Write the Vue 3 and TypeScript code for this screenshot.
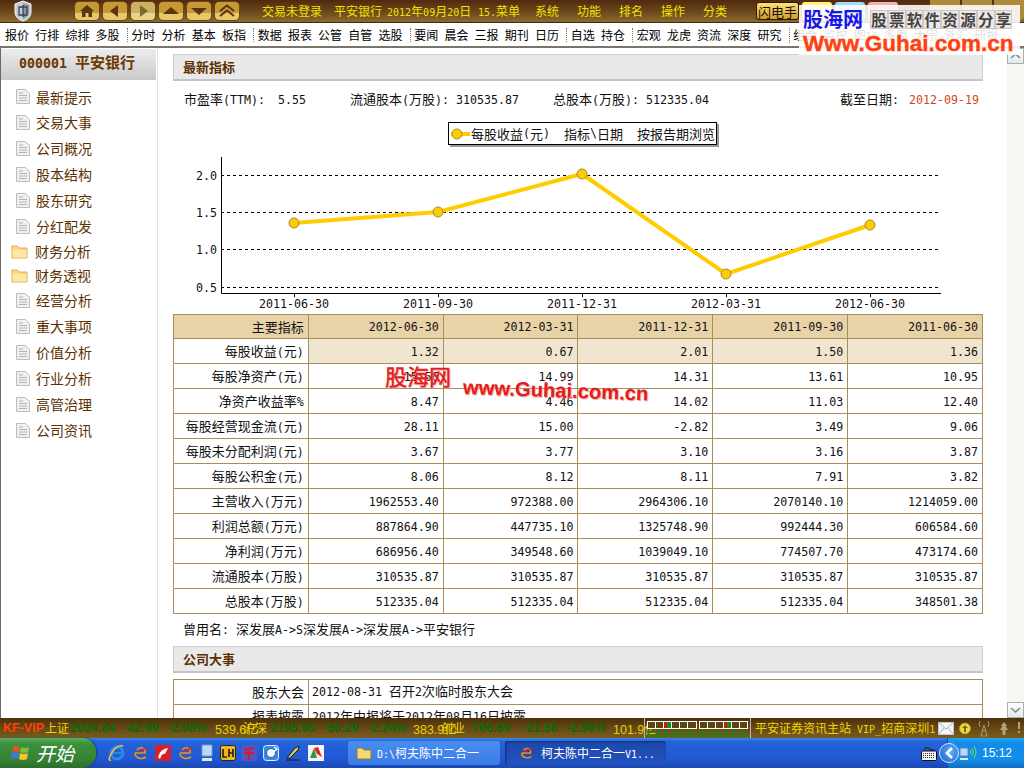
<script setup lang="ts">
import { h } from 'vue'
import type { FunctionalComponent } from 'vue'

// The reference uses a bitmap CJK face with half-width Latin; split text into runs so
// Latin characters get a monospaced face sized to the half-width advance.
function runs(s: string): { t: string; a: boolean }[] {
  const out: { t: string; a: boolean }[] = []
  for (const ch of s) {
    const a = ch.charCodeAt(0) < 128
    const last = out[out.length - 1]
    if (last && last.a === a) last.t += ch
    else out.push({ t: ch, a })
  }
  return out
}
const T: FunctionalComponent<{ s: string }> = (p) =>
  runs(p.s).map((r) => h('span', { class: r.a ? 'lat' : 'cjk' }, r.t))
T.props = ['s']

const toolGroups = [
  ['报价', '行排', '综排', '多股'],
  ['分时', '分析', '基本', '板指'],
  ['数据', '报表', '公管', '自管', '选股'],
  ['要闻', '晨会', '三报', '期刊', '日历'],
  ['自选', '持仓'],
  ['宏观', '龙虎', '资流', '深度', '研究'],
  ['组合', '监控', '图10', '多周', '大宗', '外汇', '研报']
]
const titleMenus = ['系统', '功能', '排名', '操作', '分类']
const navItems = [
  { t: '最新提示' }, { t: '交易大事' }, { t: '公司概况' }, { t: '股本结构' }, { t: '股东研究' }, { t: '分红配发' },
  { t: '财务分析', folder: true }, { t: '财务透视', folder: true },
  { t: '经营分析' }, { t: '重大事项' }, { t: '价值分析' }, { t: '行业分析' }, { t: '高管治理' }, { t: '公司资讯' }
]
const headers = ['2012-06-30', '2012-03-31', '2011-12-31', '2011-09-30', '2011-06-30']
const rows = [
  ['每股收益(元)', '1.32', '0.67', '2.01', '1.50', '1.36'],
  ['每股净资产(元)', '15.56', '14.99', '14.31', '13.61', '10.95'],
  ['净资产收益率%', '8.47', '4.46', '14.02', '11.03', '12.40'],
  ['每股经营现金流(元)', '28.11', '15.00', '-2.82', '3.49', '9.06'],
  ['每股未分配利润(元)', '3.67', '3.77', '3.10', '3.16', '3.87'],
  ['每股公积金(元)', '8.06', '8.12', '8.11', '7.91', '3.82'],
  ['主营收入(万元)', '1962553.40', '972388.00', '2964306.10', '2070140.10', '1214059.00'],
  ['利润总额(万元)', '887864.90', '447735.10', '1325748.90', '992444.30', '606584.60'],
  ['净利润(万元)', '686956.40', '349548.60', '1039049.10', '774507.70', '473174.60'],
  ['流通股本(万股)', '310535.87', '310535.87', '310535.87', '310535.87', '310535.87'],
  ['总股本(万股)', '512335.04', '512335.04', '512335.04', '512335.04', '348501.38']
]
const pts = [
  { x: 294, y: 223, d: '2011-06-30' },
  { x: 438, y: 212, d: '2011-09-30' },
  { x: 582, y: 174, d: '2011-12-31' },
  { x: 726, y: 274, d: '2012-03-31' },
  { x: 870, y: 225, d: '2012-06-30' }
]
const polyline = pts.map((p) => `${p.x},${p.y}`).join(' ')
const grid = [
  { y: 175, l: '2.0' },
  { y: 212, l: '1.5' },
  { y: 249, l: '1.0' },
  { y: 287, l: '0.5' }
]
const quote = [
  { t: 'KF-VIP', c: 'kf' }, { t: '上证', c: 'yl' }, { t: '2024.84', c: 'gn' }, { t: '-42.99', c: 'gn' }, { t: '-2.08%', c: 'gn' },
  { t: '539.6亿', c: 'yn' }, { t: '沪深', c: 'yl' }, { t: '2195.95', c: 'gn' }, { t: '-50.29', c: 'gn' }, { t: '-2.24%', c: 'gn' },
  { t: '383.9亿', c: 'yn' }, { t: '创业', c: 'yl' }, { t: '706.69', c: 'gn' }, { t: '-21.56', c: 'gn' }, { t: '-2.96%', c: 'gn' },
  { t: '101.9亿', c: 'yn' }
]
const ad = '股票软件资源分享'.split('')
</script>

<template>
  <div class="win">
    <!-- title bar -->
    <header class="title">
      <svg class="shield" width="20" height="22" viewBox="0 0 20 22">
        <path d="M10 1 L18 4 V12 C18 17 14 20 10 21 C6 20 2 17 2 12 V4 Z" fill="#c4ccd4" stroke="#f2f4f6" />
        <path d="M10 3 L16 5 V12 C16 15 13 18 10 19 Z" fill="#8c98a4" />
        <path d="M6 7 H14 V15 H6 Z M10 5 V17" fill="none" stroke="#3a4450" stroke-width="1.3" />
      </svg>
      <div class="navbtns">
        <button class="nb">
          <svg width="16" height="14" viewBox="0 0 16 14"><path d="M8 1 L15 7 H13 V13 H9.5 V9 H6.5 V13 H3 V7 H1 Z" fill="#5a3510" /></svg>
        </button>
        <button class="nb">
          <svg width="16" height="14" viewBox="0 0 16 14"><path d="M11 1 V13 L3 7 Z" fill="#5a3510" /></svg>
        </button>
        <button class="nb off">
          <svg width="16" height="14" viewBox="0 0 16 14"><path d="M5 1 V13 L13 7 Z" fill="#7a6a30" /></svg>
        </button>
        <button class="nb">
          <svg width="18" height="14" viewBox="0 0 18 14"><path d="M9 3 L17 10 H1 Z" fill="#5a3510" /></svg>
        </button>
        <button class="nb">
          <svg width="18" height="14" viewBox="0 0 18 14"><path d="M1 4 H17 L9 11 Z" fill="#5a3510" /></svg>
        </button>
        <button class="nb">
          <svg width="18" height="14" viewBox="0 0 18 14"><path d="M2 7 L9 1.5 L16 7 M2 12 L9 6.5 L16 12" fill="none" stroke="#5a3510" stroke-width="2" /></svg>
        </button>
      </div>
      <div class="status-t">
        <span class="t1">交易未登录</span>
        <span class="t2">平安银行</span>
        <span class="t3"><T s="2012年09月20日" /></span>
        <span class="t4"><T s="15.菜单" /></span>
      </div>
      <nav class="menus">
        <span v-for="m in titleMenus" :key="m">{{ m }}</span>
      </nav>
      <button class="flash">闪电手</button>
      <span class="tab tab-y">商品</span>
      <span class="tab tab-b">沪深</span>
      <span class="tab tab-p">港深</span>
      <div class="ctl"><i></i><i></i><i></i></div>
    </header>

    <!-- toolbar -->
    <div class="tools">
      <div v-for="(g, i) in toolGroups" :key="i" class="tgroup">
        <span v-for="t in g" :key="t" class="tool"><T :s="t" /></span>
      </div>
    </div>

    <!-- main -->
    <div class="main">
      <aside class="side">
        <div class="side-h"><T s="000001 平安银行" /></div>
        <ul class="nav">
          <li v-for="n in navItems" :key="n.t" :class="{ fold: n.folder }">
            <svg v-if="n.folder" width="17" height="15" viewBox="0 0 17 15">
              <path d="M1 2 H6 L8 4 H16 V14 H1 Z" fill="#ffd97a" stroke="#dcae50" />
              <path d="M1.5 6 H15.5 V13.5 H1.5 Z" fill="#fbe7a8" />
            </svg>
            <svg v-else width="16" height="15" viewBox="0 0 16 15">
              <path d="M1.5 .5 H10.5 L14.5 4.5 V14.5 H1.5 Z" fill="#f0f0f0" stroke="#bdbdbd" />
              <path d="M4 4 H8 M4 6.5 H12 M4 9 H12 M4 11.5 H12" stroke="#b4b4b4" />
            </svg>
            <span>{{ n.t }}</span>
          </li>
        </ul>
      </aside>

      <section class="content">
        <h2 class="sec">最新指标</h2>
        <div class="info">
          <span class="i1"><T s="市盈率(TTM):" /></span>
          <span class="i2"><T s="5.55" /></span>
          <span class="i3"><T s="流通股本(万股): 310535.87" /></span>
          <span class="i4"><T s="总股本(万股): 512335.04" /></span>
          <span class="i5"><T s="截至日期:" /></span>
          <span class="i6"><T s="2012-09-19" /></span>
        </div>
        <div class="legend">
          <svg width="22" height="14" viewBox="0 0 22 14">
            <path d="M2 7 H21" stroke="#ffcc00" stroke-width="4" />
            <circle cx="8" cy="7" r="5" fill="#ffcc00" stroke="#a88a30" />
          </svg>
          <T s="每股收益(元)  指标\日期  按报告期浏览" />
        </div>
        <svg class="chart" width="810" height="168" viewBox="173 145 810 168">
          <path v-for="g in grid" :key="g.y" :d="`M221 ${g.y + 0.5} H941`" stroke="#000" stroke-dasharray="3 3" fill="none" />
          <path d="M221.5 157 V293.5 H941" stroke="#000" fill="none" />
          <path v-for="p in pts" :key="p.x" :d="`M${p.x + 0.5} 293 V297`" stroke="#000" />
          <polyline :points="polyline" fill="none" stroke="#ffcc00" stroke-width="4" />
          <circle v-for="p in pts" :key="p.x" :cx="p.x" :cy="p.y" r="5" fill="#ffcc00" stroke="#a88a30" />
          <text v-for="g in grid" :key="g.l" x="217" :y="g.y + 5" text-anchor="end" class="tick">{{ g.l }}</text>
          <text v-for="p in pts" :key="p.d" :x="p.x" y="308" text-anchor="middle" class="tick">{{ p.d }}</text>
        </svg>

        <div class="tbl-wrap">
          <table class="tbl">
            <thead>
              <tr>
                <th>主要指标</th>
                <th v-for="d in headers" :key="d"><T :s="d" /></th>
              </tr>
            </thead>
            <tbody>
              <tr v-for="(r, i) in rows" :key="r[0]" :class="{ hi: i === 0 }">
                <td v-for="(c, j) in r" :key="j"><T :s="c" /></td>
              </tr>
            </tbody>
          </table>
          <span class="wm1">股海网</span>
          <span class="wm2">www.Guhai.com.cn</span>
        </div>

        <p class="former"><T s="曾用名: 深发展A->S深发展A->深发展A->平安银行" /></p>
        <h2 class="sec">公司大事</h2>
        <table class="tbl tbl2">
          <tbody>
            <tr>
              <td>股东大会</td>
              <td><T s="2012-08-31 召开2次临时股东大会" /></td>
            </tr>
            <tr>
              <td>报表披露</td>
              <td><T s="2012年中报将于2012年08月16日披露" /></td>
            </tr>
          </tbody>
        </table>
      </section>

      <div class="scroll">
        <div class="sb-btn">
          <svg width="11" height="8" viewBox="0 0 11 8"><path d="M1 6 L5.5 2 L10 6" fill="none" stroke="#7f8a90" stroke-width="1.6" /></svg>
        </div>
        <div class="sb-track"></div>
        <div class="sb-btn">
          <svg width="11" height="8" viewBox="0 0 11 8"><path d="M1 2 L5.5 6 L10 2" fill="none" stroke="#7f8a90" stroke-width="1.6" /></svg>
        </div>
      </div>
    </div>

    <!-- quote strip -->
    <footer class="quote">
      <div class="q-cells">
        <span v-for="(q, i) in quote" :key="i" :class="q.c">{{ q.t }}</span>
      </div>
      <div class="meter">
        <div class="m-col">
          <div class="m-box"><i></i><i></i><i class="r"></i><i></i><i></i><i></i></div>
          <div class="m-dash"></div>
        </div>
        <div class="m-col">
          <div class="m-box"><i></i><i></i><i></i><i class="r"></i><i></i><i></i></div>
          <div class="m-dash"></div>
        </div>
      </div>
      <div class="q-site"><T s="平安证券资讯主站 VIP_招商深圳1" /></div>
      <div class="q-icons">
        <svg width="16" height="13" viewBox="0 0 16 13">
          <rect x=".5" y=".5" width="15" height="12" fill="#f4f6fa" stroke="#c0c8d4" />
          <path d="M1 1 L8 7 L15 1 M1 12 L6 6 M15 12 L10 6" fill="none" stroke="#a8b0bc" />
        </svg>
        <svg class="coin" width="12" height="13" viewBox="0 0 12 13">
          <circle cx="6" cy="6.5" r="5.5" fill="#f0d840" stroke="#a89420" />
          <path d="M6 3 L9 6 H7 V10 H5 V6 H3 Z" fill="#7a6a10" />
        </svg>
        <svg class="ant" width="12" height="17" viewBox="0 0 12 17">
          <path d="M6 5 L3 16 H9 Z M4 11 H8" fill="none" stroke="#a89860" />
          <path d="M2 1 Q0 4 2 7 M10 1 Q12 4 10 7" fill="none" stroke="#a89860" />
        </svg>
        <svg class="tree" width="10" height="13" viewBox="0 0 10 13">
          <path d="M5 0 L8 4 H6.5 L9 8 H6.5 V13 H3.5 V8 H1 L3.5 4 H2 Z" fill="#b0a47c" />
        </svg>
        <svg class="bang" width="4" height="12" viewBox="0 0 4 12">
          <path d="M1 0 H3 V7 H1 Z M1 9 H3 V11 H1 Z" fill="#b0a47c" />
        </svg>
      </div>
    </footer>

    <!-- XP taskbar -->
    <div class="task">
      <div class="start">
        <svg width="20" height="18" viewBox="0 0 20 18">
          <path d="M2 3 Q5 1 9 3 L8 8 Q5 6.5 1 8 Z" fill="#e8502a" />
          <path d="M10 3 Q14 5 18 3 L17 8 Q13 10 9 8 Z" fill="#7ac23c" />
          <path d="M1 9 Q5 7.5 8 9 L7 15 Q4 13 0 15 Z" fill="#3c7ae0" />
          <path d="M9 9 Q13 11 17 9 L16 15 Q12 17 8 15 Z" fill="#f4c430" />
        </svg>
        <span>开始</span>
      </div>
      <div class="quick">
        <svg width="18" height="18" viewBox="0 0 18 18">
          <circle cx="9" cy="9" r="6" fill="none" stroke="#2a8ae8" stroke-width="3" />
          <path d="M4 9 H14" stroke="#2a8ae8" stroke-width="2" />
          <path d="M15 2 Q8 0 2 12 Q0 17 3 16" fill="none" stroke="#f4c430" stroke-width="1.5" />
        </svg>
        <svg width="18" height="18" viewBox="0 0 18 18">
          <path d="M3 9 H13 C14 4 8 2 5 6 M3 9 C3 14 9 16 14 13" fill="none" stroke="#f0901c" stroke-width="1.6" />
          <path d="M6 7 L15 4" stroke="#e02020" stroke-width="1.6" />
        </svg>
        <svg width="16" height="16" viewBox="0 0 16 16">
          <rect width="16" height="16" fill="#d8202c" />
          <path d="M3 12 Q5 4 13 3 L10 9 Q7 8 5 14 Z" fill="#fff" />
        </svg>
        <svg width="18" height="18" viewBox="0 0 18 18">
          <path d="M3 9 H13 C14 4 8 2 5 6 M3 9 C3 14 9 16 14 13" fill="none" stroke="#f0901c" stroke-width="1.6" />
          <path d="M6 7 L15 4" stroke="#e02020" stroke-width="1.6" />
        </svg>
        <svg width="14" height="18" viewBox="0 0 14 18">
          <rect x="2" y="1" width="10" height="11" rx="1" fill="#bcd8f4" stroke="#7a9cc4" />
          <path d="M2 14 H12 V17 H2 Z" fill="#dfe6ee" />
        </svg>
        <svg class="lh" width="16" height="16" viewBox="0 0 16 16">
          <rect x=".5" y=".5" width="15" height="15" rx="2" fill="#f4b41c" stroke="#20242c" />
          <path d="M3 4 V12 H7 M9 4 V12 M13 4 V12 M9 8 H13" fill="none" stroke="#20242c" stroke-width="1.7" />
        </svg>
        <svg width="16" height="16" viewBox="0 0 16 16">
          <rect width="16" height="16" rx="3" fill="#4a58c8" />
          <path d="M3 5 L13 3 M3 8 H13 M8 4 V14 L6 13" fill="none" stroke="#e01820" stroke-width="1.8" />
        </svg>
        <svg width="16" height="16" viewBox="0 0 16 16">
          <rect x=".5" y=".5" width="15" height="15" rx="3" fill="#3a8ae0" stroke="#dfeefc" />
          <circle cx="8" cy="8" r="4.5" fill="#f4f8fc" stroke="#1a5ab0" />
          <path d="M11 2 L14 4 L9 8" fill="none" stroke="#fff" stroke-width="1.5" />
        </svg>
        <svg width="18" height="18" viewBox="0 0 18 18">
          <path d="M2 16 H16 M3 14 L11 4 L15 2 L14 6 L6 14 Z" fill="#d8c860" stroke="#1a1a1a" />
        </svg>
        <svg width="16" height="16" viewBox="0 0 16 16">
          <rect width="16" height="16" fill="#f4f4f4" />
          <path d="M2 13 L6 3 L9 13 Z" fill="#2a9a4a" />
          <path d="M6 3 L10 2 L14 12 L9 9 Z" fill="#e02820" />
        </svg>
      </div>
      <div class="wbtn w1">
        <svg width="16" height="14" viewBox="0 0 16 14">
          <path d="M1 2 H6 L8 4 H15 V13 H1 Z" fill="#f6d878" stroke="#9a7a30" />
        </svg>
        <span><T s="D:\柯夫陈中二合一" /></span>
      </div>
      <div class="wbtn w2">
        <svg width="18" height="16" viewBox="0 0 18 18">
          <path d="M3 9 H13 C14 4 8 2 5 6 M3 9 C3 14 9 16 14 13" fill="none" stroke="#f0901c" stroke-width="1.6" />
          <path d="M6 7 L15 4" stroke="#e02020" stroke-width="1.6" />
        </svg>
        <span><T s="柯夫陈中二合一V1..." /></span>
      </div>
      <svg class="kbd" width="16" height="15" viewBox="0 0 16 15">
        <path d="M3 3 Q6 0 9 3 T13 3" fill="none" stroke="#111" />
        <rect x=".5" y="5" width="15" height="9.5" rx="1" fill="#f2f2f2" stroke="#111" />
        <path d="M2 7.5 H14 M2 9.5 H14 M2 11.5 H14" stroke="#333" stroke-dasharray="1 1" />
      </svg>
      <div class="tray">
        <div class="chev">
          <svg width="10" height="12" viewBox="0 0 10 12"><path d="M8 1 L3 6 L8 11" fill="none" stroke="#fff" stroke-width="2.6" /></svg>
        </div>
        <svg width="18" height="17" viewBox="0 0 18 17">
          <rect x="1" y="3" width="8" height="8" fill="#b8daf8" stroke="#4e86c4" />
          <path d="M1 13 H9 V15 H1 Z" fill="#e4e8f0" />
          <path d="M11 5 Q13 7 11 9 M13 3 Q16 7 13 11 M15 1 Q19 7 15 13" fill="none" stroke="#5ee05e" />
        </svg>
        <span class="clock">15:12</span>
      </div>
    </div>

    <!-- site watermark laid over the title bar -->
    <div class="ad">
      <div class="ad-top">
        <span class="ad-name">股海网</span>
        <span class="ad-cells"><b v-for="(c, i) in ad" :key="i">{{ c }}</b></span>
      </div>
      <div class="ad-url">Www.Guhai.com.cn</div>
    </div>
  </div>
</template>

<style scoped>
.win {
  width: 1024px;
  height: 768px;
  overflow: hidden;
  display: flex;
  flex-direction: column;
  position: relative;
  background: #fff;
  color: #111;
  font: 13px/1.2 "Noto Sans CJK SC", sans-serif;
}
/* title */
.title {
  height: 23px;
  flex: none;
  display: flex;
  align-items: center;
  position: relative;
  background: linear-gradient(#51290f, #6b4a1c 55%, #8a6b2e);
  border-bottom: 1px solid #3c2a10;
  box-sizing: border-box;
  color: #f2e200;
  font-size: 12px;
  --lat: 10px;
}
.shield { margin-left: 13px; flex: none; }
.navbtns { display: flex; gap: 2px; margin-left: 41px; }
.nb {
  width: 26px;
  height: 20px;
  padding: 0;
  display: flex;
  align-items: center;
  justify-content: center;
  border: 1px solid #6b4515;
  border-radius: 5px;
  background: linear-gradient(#c59a34 0 60%, #e6c769 60%);
}
.nb.off { background: linear-gradient(#cfb060 0 60%, #e8d48c 60%); }
.status-t { display: flex; margin-left: 22px; }
.t1 { width: 72px; }
.t2 { width: 53px; }
.t3 { width: 91px; }
.t4 { width: 57px; }
.menus { display: flex; gap: 18px; }
.menus span { width: 24px; }
.flash {
  margin-left: 29px;
  width: 43px;
  height: 18px;
  padding: 0;
  border: 1px solid #2a1a08;
  border-radius: 3px;
  background: linear-gradient(#ffe27c, #d89a20);
  color: #111;
  font: 13px/1 "Noto Sans CJK SC", sans-serif;
}
.tab {
  width: 30px;
  height: 18px;
  margin-left: 3px;
  border-radius: 3px;
  color: #999;
  text-align: center;
  line-height: 18px;
}
.tab-y { background: #fff37c; }
.tab-b { background: #9fdcfa; }
.tab-p { background: #f8aeb4; }
.ctl { display: flex; gap: 2px; margin-left: auto; align-self: flex-start; }
.ctl i { width: 30px; height: 20px; background: #b08a3c; border-radius: 0 0 4px 4px; }

/* tools */
.tools {
  height: 25px;
  flex: none;
  display: flex;
  align-items: center;
  padding: 1px 0 0 5px;
  box-sizing: border-box;
  border-bottom: 2px solid #7c7468;
  font-size: 12px;
  --lat: 10px;
  white-space: nowrap;
  overflow: hidden;
}
.tgroup { display: flex; }
.tgroup + .tgroup { margin-left: 1px; padding-left: 3.6px; border-left: 1px dotted #777; }
.tool { width: 30.2px; flex: none; color: #000; }

/* main */
.main {
  flex: 1;
  min-height: 0;
  display: flex;
}
.side {
  width: 158px;
  flex: none;
  box-sizing: border-box;
  border-left: 1px solid #6a6a6a;
  border-right: 1px solid #e2e2da;
}
.side-h {
  height: 31px;
  margin-right: 1px;
  margin-top: 1px;
  background: linear-gradient(#ededed, #c9c9c9);
  color: #6a3a00;
  font-size: 15px;
  font-weight: 700;
  line-height: 25px;
  padding-left: 18px;
  box-sizing: border-box;
  --lat: 13.3px;
}
.nav { list-style: none; margin: 4px 0 0; padding: 0; }
.nav li {
  height: 25.9px;
  display: flex;
  align-items: center;
  padding-left: 14px;
  color: #5c3000;
  font-size: 14px;
  gap: 5px;
}
.nav li.fold { height: 24.3px; padding-left: 10px; gap: 7px; }

.content {
  flex: 1;
  min-width: 0;
  overflow: hidden;
  padding: 6px 24px 0 15px;
}
.sec {
  margin: 0;
  height: 27px;
  box-sizing: border-box;
  border: 1px solid #cfcfcf;
  border-bottom-width: 2px;
  border-bottom-color: #c4c4c4;
  background: #e9e9e9;
  color: #5c3000;
  font-size: 13px;
  font-weight: 700;
  line-height: 24px;
  padding-left: 9px;
}
.info {
  height: 37px;
  display: flex;
  align-items: center;
  white-space: nowrap;
  color: #111;
}
.i1 { margin-left: 11px; width: 94px; }
.i2 { width: 72px; }
.i3 { width: 203px; }
.i4 { width: 287px; }
.i5 { width: 69px; }
.i6 { color: #d2481a; }
.legend {
  display: flex;
  align-items: center;
  box-sizing: border-box;
  width: 269px;
  height: 23px;
  margin: 4px 0 0 275px;
  border: 1px solid #000;
  box-shadow: 2px 2px 0 #999;
  white-space: nowrap;
  background: #fff;
}
.legend svg { flex: none; }
.chart { display: block; }
.tick {
  font: 11.63px "DejaVu Sans Mono", monospace;
  fill: #111;
}
.tbl-wrap { position: relative; margin-top: 1px; }
.tbl {
  width: 810px;
  table-layout: fixed;
  border-collapse: collapse;
  font-size: 13px;
}
.tbl th, .tbl td {
  border: 1px solid #a98e5c;
  text-align: right;
  padding: 0 4px 0 0;
  height: 24px;
  font-weight: 400;
  white-space: nowrap;
  overflow: hidden;
}
.tbl td:first-child, .tbl th:first-child { padding-right: 4px; }
.tbl th { background: #e8d2a8; height: 23px; }
.tbl .hi td:not(:first-child) { background: #f0e6d0; }
.wm1, .wm2 {
  position: absolute;
  color: #e41c1c;
  white-space: nowrap;
  text-shadow: 1px 1px 1px #f3a0a0;
}
.wm1 {
  left: 212px;
  top: 47px;
  font: 400 22px/28px "Noto Sans CJK SC", sans-serif;
  -webkit-text-stroke: .4px #e41c1c;
}
.wm2 {
  left: 290px;
  top: 61px;
  font: 700 20.2px/24px "Liberation Sans", sans-serif;
  transform: rotate(2deg);
  transform-origin: left center;
}
.former {
  margin: 0;
  height: 32px;
  line-height: 30px;
  padding-left: 10px;
  white-space: pre;
}
.tbl2 { margin-top: 6px; }
.tbl2 td { height: 23.5px; }
.tbl2 td:first-child { width: 130px; }
.tbl2 td:last-child { text-align: left; padding-left: 3px; }

.scroll {
  width: 17px;
  flex: none;
  display: flex;
  flex-direction: column;
  background: #f6f6f2;
}
.sb-btn {
  height: 16px;
  box-sizing: border-box;
  border: 1px solid #a8b0b4;
  background: linear-gradient(#fff, #e4e8e8);
  display: flex;
  align-items: center;
  justify-content: center;
  flex: none;
}
.sb-track { flex: 1; }

/* quote */
.quote {
  height: 20px;
  flex: none;
  display: flex;
  align-items: center;
  background: linear-gradient(#4d300c, #6c4c17 60%, #7a5c20);
  white-space: nowrap;
  position: relative;
}
.q-cells {
  flex: none;
  display: grid;
  grid-template-columns: 42px 25px 53px 44px 48px 28px 27px 53px 44px 46px 28px 31px 50px 44px 47px 31px;
  padding-left: 3px;
  align-items: center;
}
.q-cells span { white-space: nowrap; overflow: visible; }
.kf { color: #ff4208; font: 700 12.5px "Liberation Sans", sans-serif; }
.yl { color: #ecd700; font-size: 12px; }
.gn { color: #0a6a0a; font: 700 12.5px "Liberation Sans", sans-serif; }
.yn { color: #e6d000; font: 12.5px "Liberation Sans", "Noto Sans CJK SC", sans-serif; }
.meter {
  width: 107px;
  height: 20px;
  box-sizing: border-box;
  border-left: 1px solid #b8b8b8;
  border-right: 1px solid #b8b8b8;
  display: flex;
  gap: 2px;
  padding: 3px 2px 0;
  flex: none;
}
.m-col { width: 50px; }
.m-box {
  display: flex;
  height: 6px;
  border: 1px solid #fff;
  background: #5d4312;
}
.m-box i { flex: 1; border-right: 1px solid #fff; }
.m-box i:last-child { border-right: 0; }
.m-box i.r { background: linear-gradient(90deg, #e01010 50%, #109010 50%); }
.m-dash {
  height: 6px;
  margin-top: 2px;
  background:
    repeating-linear-gradient(90deg, #108a10 0 6px, transparent 6px 8px) 0 0 / 100% 2px no-repeat,
    repeating-linear-gradient(90deg, #108a10 0 6px, transparent 6px 8px) 0 4px / 100% 2px no-repeat;
}
.q-site {
  color: #ecd700;
  font-size: 12px;
  --lat: 10px;
  margin-left: 4px;
  width: 183px;
  flex: none;
}
.q-icons { flex: 1; display: flex; align-items: center; }
.coin { margin-left: 5px; }
.ant { margin-left: 7px; }
.tree { margin-left: 9px; }
.bang { margin-left: 8px; }

/* taskbar */
.task {
  height: 30px;
  flex: none;
  display: flex;
  align-items: center;
  background: linear-gradient(#3a86ee 0, #2463da 12%, #2158d2 70%, #1a48b4);
  position: relative;
}
.start {
  width: 96px;
  height: 30px;
  flex: none;
  display: flex;
  align-items: center;
  box-sizing: border-box;
  padding-left: 11px;
  gap: 5px;
  background: linear-gradient(#5bae5b, #3c8f3c 20%, #348434 70%, #2b6d2b);
  border-radius: 0 14px 14px 0;
  box-shadow: 1px 0 2px #123a8a;
  color: #fff;
  font-size: 19px;
  font-style: italic;
}
.quick { display: flex; align-items: center; gap: 5.5px; margin-left: 12px; width: 240px; flex: none; }
.quick svg { flex: none; }
.wbtn {
  height: 24px;
  display: flex;
  align-items: center;
  gap: 5px;
  box-sizing: border-box;
  padding-left: 8px;
  color: #fff;
  border-radius: 3px;
  flex: none;
  white-space: nowrap;
  font-size: 12px;
  --lat: 10px;
}
.w1 { width: 152px; background: linear-gradient(#4a8ef0, #3a7ae6); }
.w2 { width: 161px; margin-left: 5px; background: linear-gradient(#1c48a8, #2152c0); box-shadow: inset 1px 1px 2px #123070; padding-left: 13px; }
.kbd { margin-left: auto; margin-right: 10px; flex: none; }
.tray {
  width: 77px;
  height: 30px;
  flex: none;
  display: flex;
  align-items: center;
  position: relative;
  background: linear-gradient(#20a4f0, #128ae6 20%, #1390e8 70%, #0f6ec8);
  border-left: 1px solid #0e4ea8;
  box-sizing: border-box;
  color: #fff;
  padding-left: 11px;
}
.chev {
  position: absolute;
  left: -9px;
  top: 5px;
  width: 18px;
  height: 18px;
  border-radius: 50%;
  background: radial-gradient(circle at 60% 40%, #5ab0f8, #1b5ccc);
  border: 1px solid #dbe8fa;
  display: flex;
  align-items: center;
  justify-content: center;
}
.clock { margin-left: 5px; font: 12px "Liberation Sans", sans-serif; }

/* overlay */
.ad {
  position: absolute;
  left: 799px;
  top: 5px;
  width: 221px;
  height: 50px;
  background: rgba(255, 255, 255, .88);
  box-sizing: border-box;
  padding: 1px 0 0 4px;
}
.ad-top { display: flex; align-items: center; height: 26px; }
.ad-name {
  width: 63px;
  color: #1616e8;
  font: 700 20px/26px "Noto Sans CJK SC", sans-serif;
  white-space: nowrap;
}
.ad-cells { display: flex; margin-left: 4px; }
.ad-cells b {
  width: 17.8px;
  height: 19px;
  box-sizing: border-box;
  border: 1px solid #cfc6c6;
  background: #efe6e6;
  color: #444;
  font: 700 15.5px/17px "Noto Sans CJK SC", sans-serif;
  text-align: center;
}
.ad-url {
  color: #ff4010;
  font: 700 22.5px/23px "Liberation Sans", sans-serif;
  white-space: nowrap;
  -webkit-text-stroke: .4px #ff4010;
}
</style>

<style>
.lat {
  font-family: "DejaVu Sans Mono", "Liberation Mono", monospace;
  font-size: var(--lat, 11.63px);
  white-space: pre;
}
</style>
